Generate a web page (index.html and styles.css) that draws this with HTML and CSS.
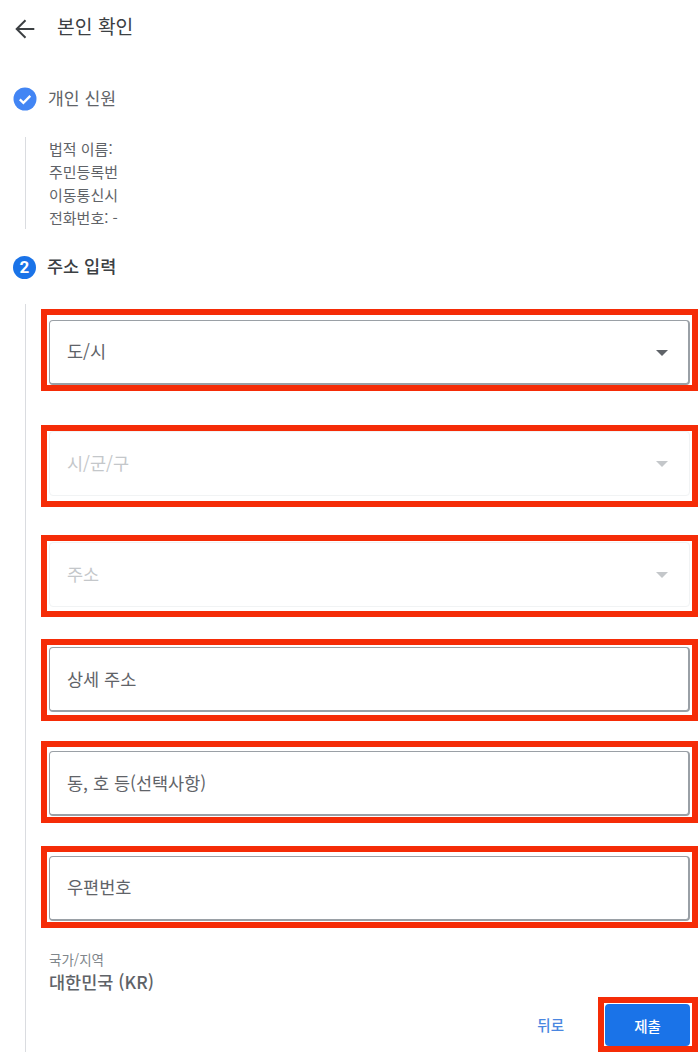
FILE: index.html

```html
<!DOCTYPE html>
<html lang="ko">
<head>
    <meta charset="UTF-8">
    <meta name="viewport" content="width=device-width, initial-scale=1.0">
    <title>본인 확인</title>
    <link rel="stylesheet" href="styles.css">
</head>
<body>
    <header class="top-bar">
        <svg class="back-icon" width="24" height="24" viewBox="0 0 24 24"><path d="M21.3 12H5M12.5 3.2 3.7 12l8.8 8.8" fill="none" stroke="#3c4043" stroke-width="2"/></svg>
        <h1 class="page-title">본인 확인</h1>
    </header>

    <div class="step step-done">
        <svg class="step-icon" width="24" height="24" viewBox="0 0 24 24">
            <circle cx="12" cy="12" r="11.5" fill="#4285f4"/>
            <path d="M6.8 12.4l3.6 3.5 6.9-7" fill="none" stroke="#fff" stroke-width="2.3"/>
        </svg>
        <span class="step-label">개인 신원</span>
    </div>

    <div class="rail rail-info">
        <p>법적 이름:</p>
        <p>주민등록번</p>
        <p>이동통신시</p>
        <p>전화번호: -</p>
    </div>

    <div class="step step-current">
        <span class="step-num">2</span>
        <span class="step-label">주소 입력</span>
    </div>

    <div class="rail rail-form">
        <div class="mark inset-5">
            <div class="field field-high">도/시<span class="caret"></span></div>
        </div>
        <div class="mark gap-34">
            <div class="field field-off">시/군/구<span class="caret"></span></div>
        </div>
        <div class="mark inset-1 gap-28">
            <div class="field field-off">주소<span class="caret"></span></div>
        </div>
        <div class="mark inset-2 gap-22">
            <div class="field">상세 주소</div>
        </div>
        <div class="mark inset-4 gap-20">
            <div class="field">동, 호 등(선택사항)</div>
        </div>
        <div class="mark inset-4 gap-23">
            <div class="field field-high">우편번호</div>
        </div>

        <div class="country">
            <div class="country-label">국가/지역</div>
            <div class="country-name">대한민국 (KR)</div>
        </div>

        <div class="actions">
            <button class="back-btn">뒤로</button>
            <div class="mark-btn"><button class="submit-btn">제출</button></div>
        </div>
    </div>
</body>
</html>
```

FILE: styles.css

```css
body {
    margin: 0;
    width: 700px;
    height: 1055px;
    overflow: hidden;
    background-color: #fff;
    color: #5f6368;
    font-family: "Noto Sans CJK KR", "Noto Sans", sans-serif;
}
p {
    margin: 0;
}
.top-bar {
    display: flex;
    align-items: center;
    height: 54px;
    padding-left: 13px;
}
.back-icon {
    margin-top: 4px;
    margin-right: 20px;
}
.page-title {
    margin: 0 0 2px;
    font-size: 19.3px;
    font-weight: 400;
    color: #3c4043;
}
.step {
    display: flex;
    align-items: center;
    height: 24px;
    padding-left: 13px;
}
.step-done {
    margin-top: 33px;
}
.step-current {
    margin-top: 26px;
}
.step-icon, .step-num {
    margin-right: 11px;
    flex: none;
}
.step-num {
    width: 23px;
    height: 23px;
    border-radius: 50%;
    background-color: #1a73e8;
    color: #fff;
    font-size: 17px;
    font-weight: 700;
    line-height: 23px;
    text-align: center;
    font-family: "Roboto", sans-serif;
}
.step-label {
    margin-bottom: 3px;
    font-size: 17.2px;
    color: #5f6368;
}
.step-current .step-label {
    font-weight: 500;
    font-size: 17.5px;
    color: #3c4043;
}
.rail {
    margin-left: 25px;
    border-left: 1px solid #dadce0;
}
.rail-info {
    margin-top: 27px;
    height: 92px;
    padding-left: 23px;
    font-size: 15px;
    line-height: 23px;
}
.rail-info p:first-child {
    margin-top: -1px;
}
.rail-form {
    margin-top: 25px;
    height: 743px;
    padding-top: 5px;
    padding-left: 15px;
    width: 657px;
}
.mark {
    display: flex;
    align-items: flex-start;
    box-sizing: border-box;
    height: 82px;
    padding: 0 2px;
    border: 6px solid #f52c07;
}
.inset-1 { padding-top: 1px; }
.inset-2 { padding-top: 2px; }
.inset-4 { padding-top: 4px; }
.inset-5 { padding-top: 5px; }
.gap-20 { margin-top: 20px; }
.gap-22 { margin-top: 22px; }
.gap-23 { margin-top: 23px; }
.gap-28 { margin-top: 28px; }
.gap-34 { margin-top: 34px; }
.field {
    position: relative;
    flex: 1;
    box-sizing: border-box;
    height: 65px;
    padding-left: 17px;
    border: 1px solid #9aa0a6;
    border-bottom-width: 2px;
    border-right-width: 2px;
    border-radius: 4px;
    font-size: 17.5px;
    line-height: 62px;
    color: #5f6368;
}
.field-high {
    line-height: 60px;
}
.field-off {
    border: 1px solid #f1f3f4;
    color: #c4c7ca;
}
.caret {
    position: absolute;
    right: 20px;
    top: 29px;
    border-left: 6px solid transparent;
    border-right: 6px solid transparent;
    border-top: 6px solid #5f6368;
}
.field-off .caret {
    right: 21px;
    border-top-color: #c4c7ca;
}
.country {
    margin-top: 22px;
    margin-left: 8px;
}
.country-label {
    margin-bottom: 2px;
    font-size: 13.5px;
    line-height: 18px;
    color: #80868b;
}
.country-name {
    font-size: 17.5px;
    font-weight: 500;
    line-height: 24px;
}
.actions {
    display: flex;
    justify-content: flex-end;
    align-items: center;
    margin-top: 3px;
}
button {
    border: none;
    background: none;
    font-family: inherit;
    cursor: pointer;
}
.back-btn {
    margin-right: 34px;
    padding: 0;
    font-size: 14.5px;
    font-weight: 500;
    color: #4a86e0;
}
.mark-btn {
    border: 6px solid #f52c07;
    padding: 1px 2px 0 1px;
}
.submit-btn {
    display: block;
    width: 85px;
    height: 42px;
    border-radius: 4px;
    background-color: #1a73e8;
    color: #fff;
    font-size: 14.5px;
    font-weight: 500;
}
```
